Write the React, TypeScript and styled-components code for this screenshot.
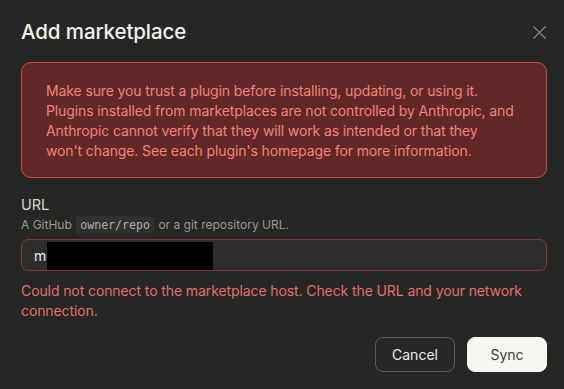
import React from "react";
import styled, { createGlobalStyle } from "styled-components";

const Global = createGlobalStyle`
  html, body { margin: 0; padding: 0; background: #262624; }
  body { font-family: Inter, "Noto Sans", sans-serif; -webkit-font-smoothing: antialiased; }
  * { box-sizing: border-box; }
`;

const Dialog = styled.div`
  width: 564px;
  height: 389px;
  background: #262624;
  padding: 18px 17px 17px 21px;
  display: flex;
  flex-direction: column;
`;

const Header = styled.div`
  height: 28px;
  display: flex;
  align-items: center;
  justify-content: space-between;
  margin-bottom: 16px;
`;

const Title = styled.h2`
  margin: 0;
  font-size: 20.5px;
  line-height: 28px;
  font-weight: 500;
  color: #f2f0ea;
  letter-spacing: -0.1px;
`;

const CloseButton = styled.button`
  width: 20px;
  height: 20px;
  padding: 0;
  margin-right: -2px;
  background: none;
  border: none;
  display: flex;
  align-items: center;
  justify-content: center;
  color: #8e8c86;
  cursor: pointer;
`;

const Warning = styled.div`
  border: 1px solid #c4504f;
  background: #622828;
  border-radius: 10px;
  padding: 18px 30px 16px 24px;
  color: #f0837c;
  font-size: 14px;
  line-height: 20px;
  letter-spacing: -0.12px;
`;

const Field = styled.div`
  margin-top: 17px;
  display: flex;
  flex-direction: column;
`;

const Label = styled.label`
  font-size: 14.5px;
  line-height: 20px;
  color: #d9d7d1;
`;

const Help = styled.div`
  margin-top: 1px;
  font-size: 12px;
  line-height: 18px;
  color: #9c9a94;
`;

const Code = styled.code`
  font-family: "DejaVu Sans Mono", "Liberation Mono", monospace;
  font-size: 11.6px;
  background: #30302e;
  color: #b3b1ab;
  padding: 2px 4px;
  border-radius: 4px;
  margin: 0 1px;
`;

const InputWrap = styled.div`
  position: relative;
  margin-top: 5px;
`;

const Input = styled.input`
  width: 100%;
  height: 32px;
  border: 1px solid #7b3a3a;
  border-radius: 7px;
  background: #2d2d2b;
  color: #f0eee8;
  font-family: Inter, "Noto Sans", sans-serif;
  font-size: 14px;
  padding: 0 12px;
  outline: none;
`;

const Redaction = styled.span`
  position: absolute;
  left: 26px;
  top: 3px;
  width: 166px;
  height: 28px;
  background: #000;
`;

const ErrorText = styled.div`
  margin-top: 10px;
  font-size: 14px;
  line-height: 20px;
  letter-spacing: -0.1px;
  color: #e3706b;
`;

const Footer = styled.div`
  margin-top: 16px;
  display: flex;
  justify-content: flex-end;
  gap: 12px;
`;

const Button = styled.button<{ $primary?: boolean }>`
  width: 80px;
  height: 35px;
  border-radius: 8px;
  font-family: Inter, "Noto Sans", sans-serif;
  font-size: 14px;
  cursor: pointer;
  border: 1px solid ${(p) => (p.$primary ? "#f7f5f0" : "#5b5a56")};
  background: ${(p) => (p.$primary ? "#f7f5f0" : "transparent")};
  color: ${(p) => (p.$primary ? "#3c3b38" : "#ebe9e3")};
`;

export default function App() {
  return (
    <>
      <Global />
      <Dialog>
        <Header>
          <Title>Add marketplace</Title>
          <CloseButton aria-label="Close">
            <svg width="13" height="13" viewBox="0 0 13 13" fill="none">
              <path d="M0.5 0.5L12.5 12.5M12.5 0.5L0.5 12.5" stroke="currentColor" strokeWidth="1.1" />
            </svg>
          </CloseButton>
        </Header>
        <Warning>
          Make sure you trust a plugin before installing, updating, or using it. Plugins installed from
          marketplaces are not controlled by Anthropic, and Anthropic cannot verify that they will work as
          intended or that they won't change. See each plugin's homepage for more information.
        </Warning>
        <Field>
          <Label>URL</Label>
          <Help>
            A GitHub <Code>owner/repo</Code> or a git repository URL.
          </Help>
          <InputWrap>
            <Input defaultValue="mo" />
            <Redaction />
          </InputWrap>
          <ErrorText>
            Could not connect to the marketplace host. Check the URL and your network connection.
          </ErrorText>
        </Field>
        <Footer>
          <Button>Cancel</Button>
          <Button $primary>Sync</Button>
        </Footer>
      </Dialog>
    </>
  );
}
